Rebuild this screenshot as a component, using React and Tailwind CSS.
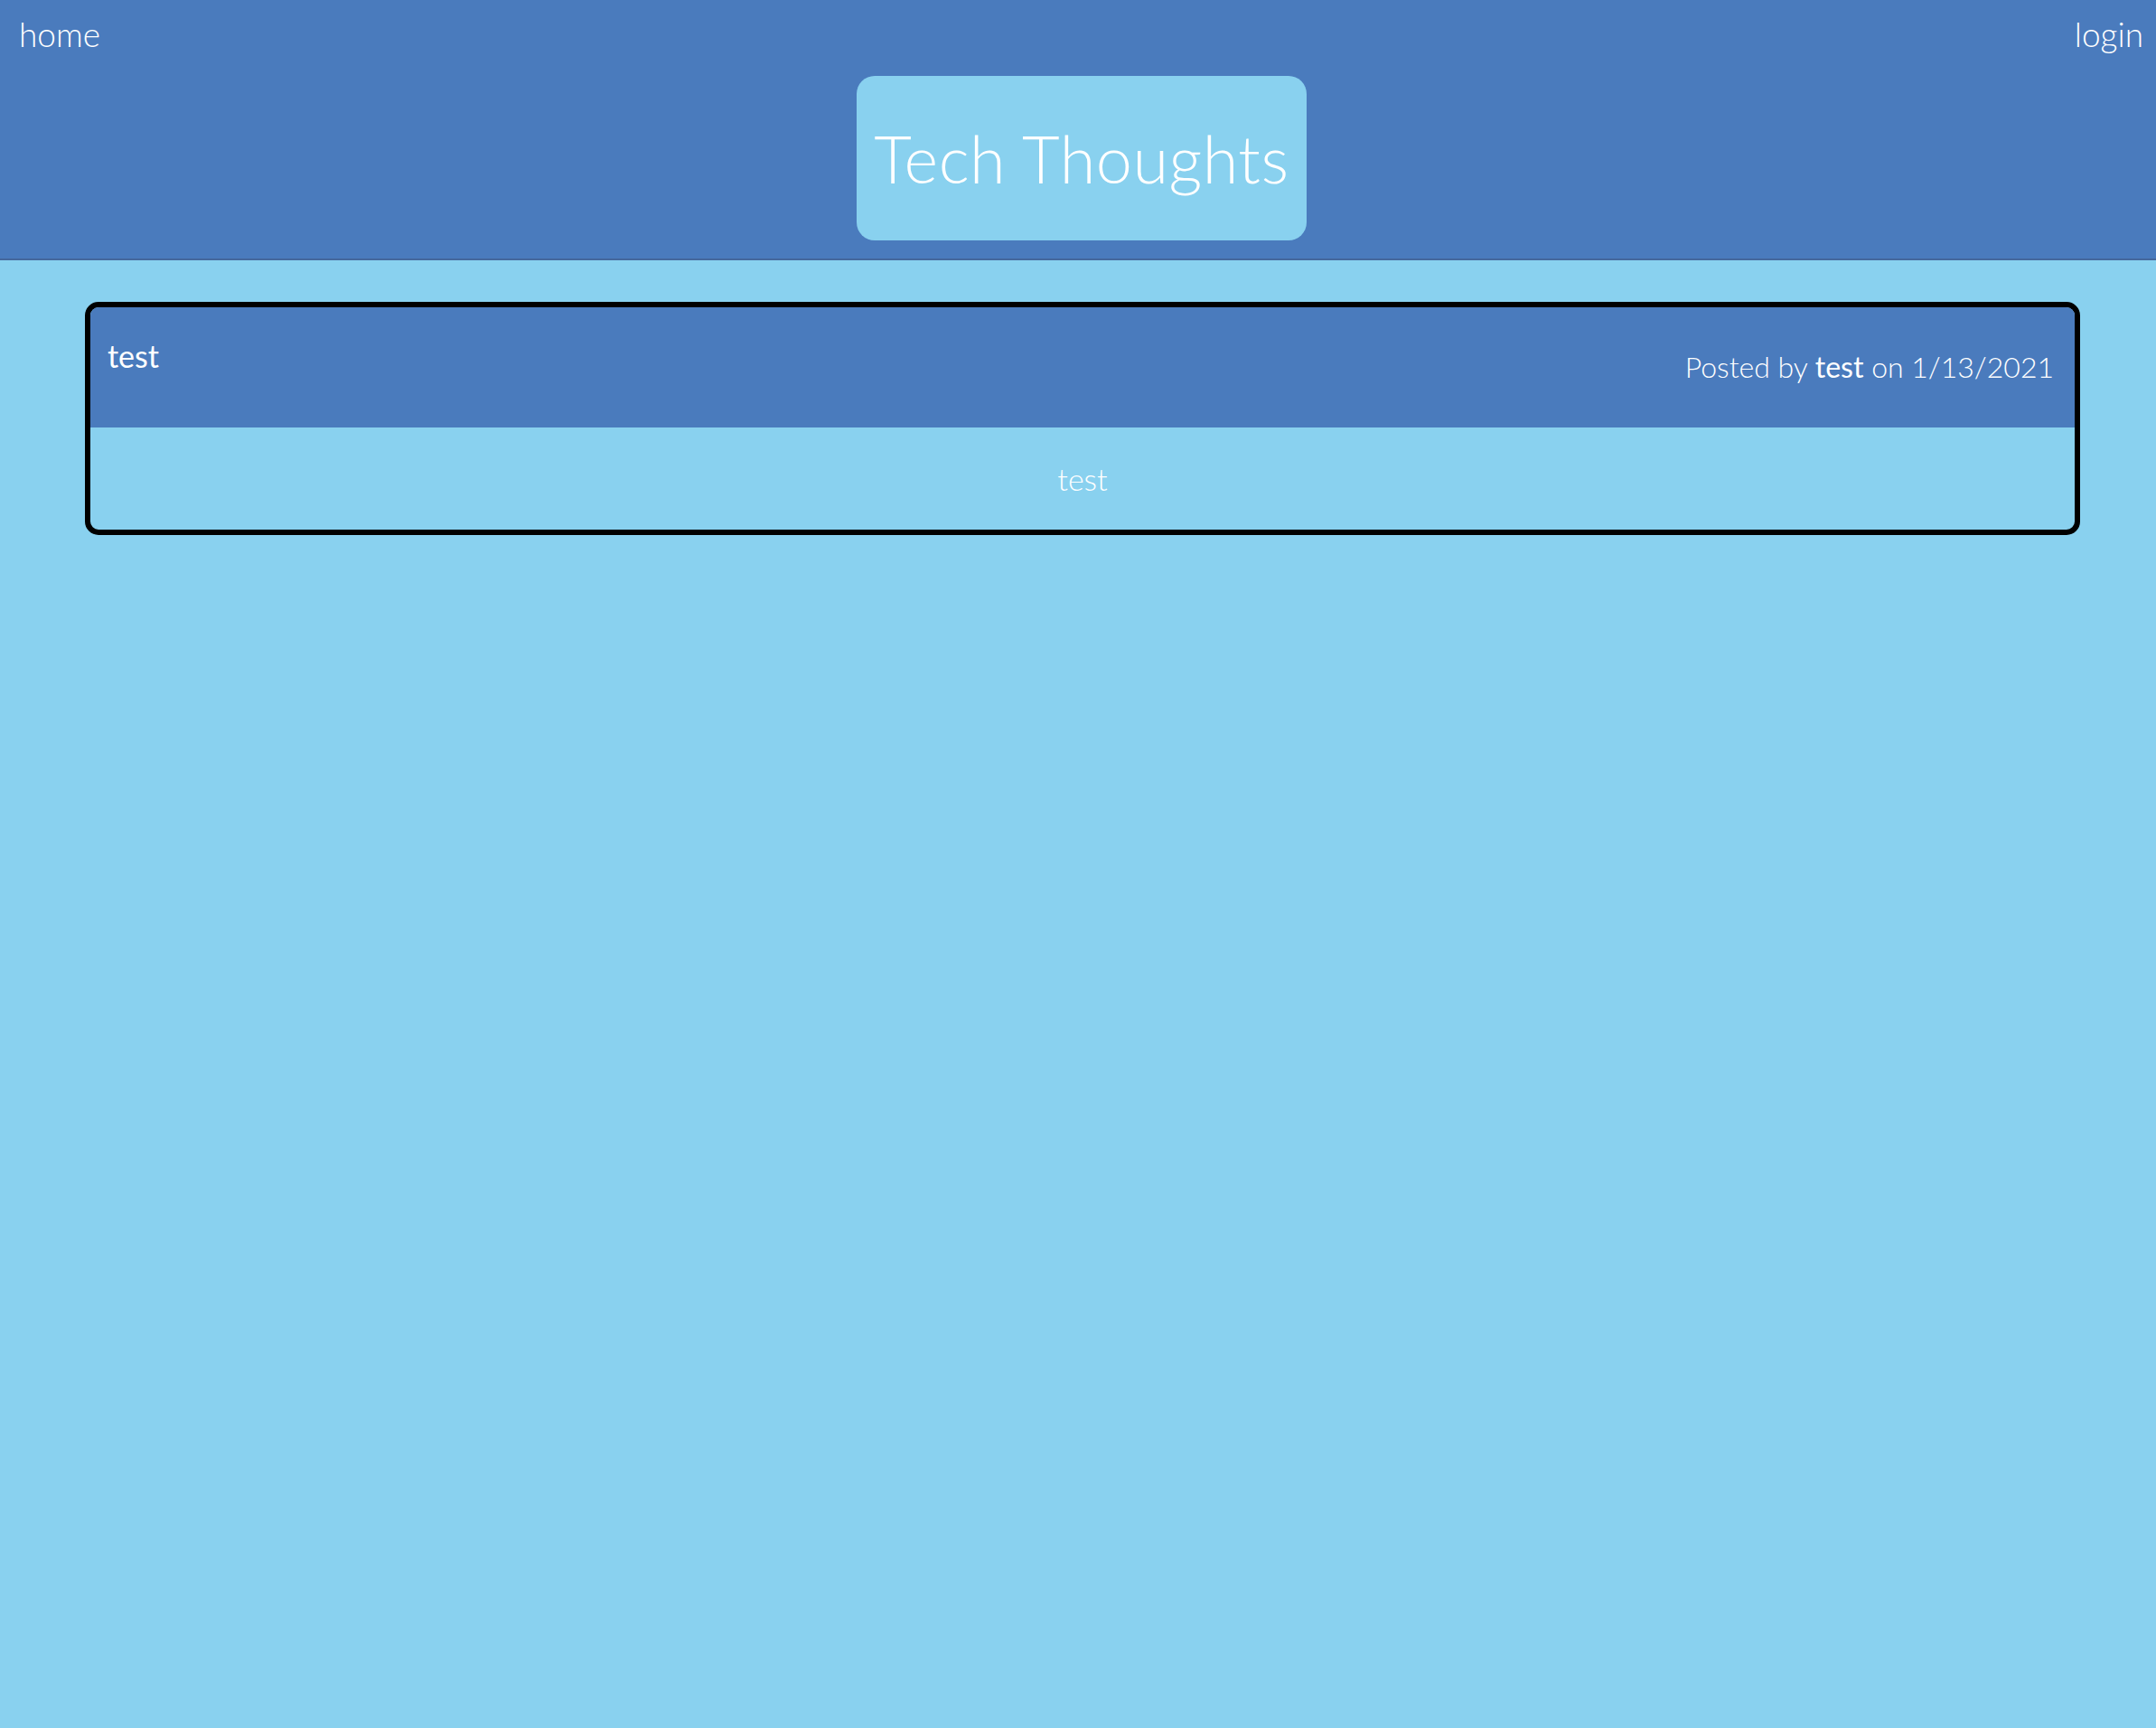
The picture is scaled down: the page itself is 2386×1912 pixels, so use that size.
export default function App() {
  return (
    <div className="min-h-screen bg-[#89d1ef] font-['Lato',sans-serif] font-light text-white">
      {/* Header */}
      <header className="h-[288px] bg-[#4a7bbd] border-b-2 border-[#44689c]">
        <nav className="flex justify-between pl-[21px] pr-[14px] pt-[14px] text-[37px] leading-[48px]">
          <a href="#">home</a>
          <a href="#">login</a>
        </nav>
        <div className="flex justify-center mt-[22px] pl-[8px]">
          <h1 className="w-[498px] h-[182px] flex items-center justify-center rounded-[20px] bg-[#89d1ef] text-[72px] font-light tracking-[0.5px]">
            Tech Thoughts
          </h1>
        </div>
      </header>

      {/* Posts */}
      <main className="ml-[94px] mr-[84px] pt-[46px]">
        <div className="border-[6px] border-black rounded-[15px] overflow-hidden">
          <div className="h-[133px] bg-[#4a7bbd] flex justify-between pl-[19px] pr-[23px]">
            <h2 className="pt-[30px] text-[34px] font-normal leading-[48px]">test</h2>
            <p className="pt-[42px] text-[32px] leading-[48px]">
              Posted by <span className="font-normal">test</span> on 1/13/2021
            </p>
          </div>
          <div className="h-[113px] flex items-center justify-center text-[34px]">
            <p>test</p>
          </div>
        </div>
      </main>
    </div>
  );
}
